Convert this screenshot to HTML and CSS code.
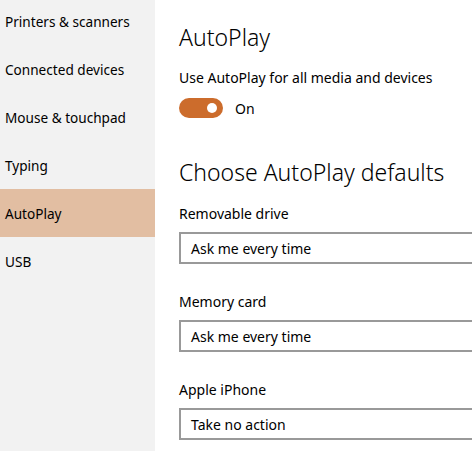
FILE: index.html
```html
<!DOCTYPE html>
<html>
<head>
<meta charset="utf-8">
<link rel="stylesheet" href="styles.css">
</head>
<body>
<div class="app">
  <nav class="sidebar">
    <div class="nav-item">Printers &amp; scanners</div>
    <div class="nav-item">Connected devices</div>
    <div class="nav-item">Mouse &amp; touchpad</div>
    <div class="nav-item">Typing</div>
    <div class="nav-item active">AutoPlay</div>
    <div class="nav-item">USB</div>
  </nav>
  <main class="content">
    <h1 class="title">AutoPlay</h1>
    <div class="label first">Use AutoPlay for all media and devices</div>
    <div class="toggle-row">
      <span class="toggle"><span class="knob"></span></span>
      <span class="toggle-text">On</span>
    </div>
    <h2 class="subtitle">Choose AutoPlay defaults</h2>
    <div class="field">
      <div class="label">Removable drive</div>
      <div class="select">Ask me every time</div>
    </div>
    <div class="field">
      <div class="label">Memory card</div>
      <div class="select">Ask me every time</div>
    </div>
    <div class="field">
      <div class="label">Apple iPhone</div>
      <div class="select">Take no action</div>
    </div>
  </main>
</div>
</body>
</html>
```
FILE: styles.css
```css
* { box-sizing: border-box; }
html, body {
  margin: 0;
  padding: 0;
  width: 472px;
  height: 451px;
  overflow: hidden;
  background: #ffffff;
  font-family: "Noto Sans", "Open Sans", sans-serif;
  color: #000;
}
.app {
  display: flex;
  height: 451px;
}
.sidebar {
  width: 155px;
  flex: none;
  background: #f2f2f2;
  margin-top: -3px;
}
.nav-item {
  height: 48px;
  display: flex;
  align-items: center;
  padding-left: 5px;
  font-size: 13.6px;
  color: #000;
}
.nav-item.active {
  background: #e2bea2;
}
.content {
  flex: 1;
  padding-left: 24px;
  padding-top: 22px;
  min-width: 0;
}
.title {
  margin: 0;
  font-size: 23px;
  font-weight: 300;
  line-height: 30px;
}
.label {
  font-size: 14px;
  line-height: 20px;
}
.label.first {
  margin-top: 16px;
}
.toggle-row {
  margin-top: 10px;
  height: 20px;
  display: flex;
  align-items: center;
}
.toggle {
  width: 44px;
  height: 20px;
  border-radius: 10px;
  background: #cc6c2c;
  display: flex;
  align-items: center;
  justify-content: flex-end;
  padding-right: 6px;
}
.knob {
  width: 10px;
  height: 10px;
  border-radius: 50%;
  background: #fff;
}
.toggle-text {
  margin-left: 12px;
  font-size: 14px;
}
.subtitle {
  margin: 38px 0 0;
  font-size: 23px;
  font-weight: 300;
  line-height: 32px;
}
.field {
  margin-top: 16px;
}
.field + .field {
  margin-top: 28px;
}
.select {
  margin-top: 8px;
  width: 100%;
  height: 32px;
  border: 2px solid #999;
  border-right: none;
  padding-left: 10px;
  display: flex;
  align-items: center;
  font-size: 14px;
}
```
